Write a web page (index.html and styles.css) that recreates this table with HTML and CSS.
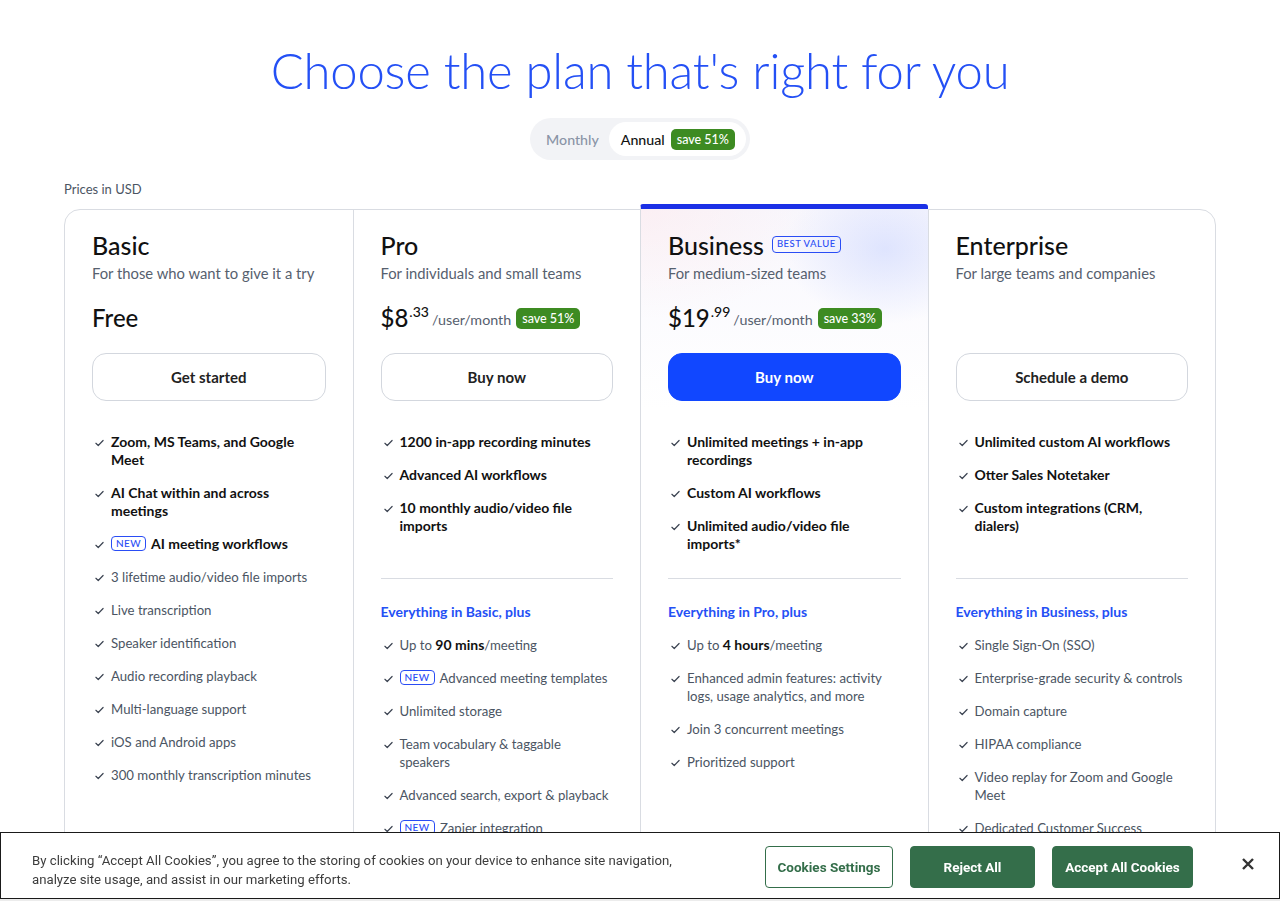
FILE: index.html
```html
<!DOCTYPE html>
<html lang="en">
<head>
<meta charset="utf-8">
<title>Choose the plan that's right for you</title>
<link rel="stylesheet" href="styles.css">
</head>
<body>
<main class="page">
  <h1 class="title">Choose the plan that's right for you</h1>
  <div class="toggle-wrap">
    <div class="toggle">
      <span class="seg seg-off">Monthly</span>
      <span class="seg seg-on">Annual <span class="save">save 51%</span></span>
    </div>
  </div>
  <p class="currency">Prices in USD</p>

  <section class="plans">
    <!-- Basic -->
    <div class="plan">
      <h2 class="plan-name">Basic</h2>
      <p class="plan-sub">For those who want to give it a try</p>
      <div class="price"><span class="amount">Free</span></div>
      <button class="btn">Get started</button>
      <ul class="feats">
        <li class="b"><svg class="chk" viewBox="0 0 10 8"><path d="M1 4.3 3.6 6.8 9 1.2"/></svg><span>Zoom, MS Teams, and Google Meet</span></li>
        <li class="b"><svg class="chk" viewBox="0 0 10 8"><path d="M1 4.3 3.6 6.8 9 1.2"/></svg><span>AI Chat within and across meetings</span></li>
        <li class="b"><svg class="chk" viewBox="0 0 10 8"><path d="M1 4.3 3.6 6.8 9 1.2"/></svg><span><span class="new">NEW</span> AI meeting workflows</span></li>
        <li><svg class="chk" viewBox="0 0 10 8"><path d="M1 4.3 3.6 6.8 9 1.2"/></svg><span>3 lifetime audio/video file imports</span></li>
        <li><svg class="chk" viewBox="0 0 10 8"><path d="M1 4.3 3.6 6.8 9 1.2"/></svg><span>Live transcription</span></li>
        <li><svg class="chk" viewBox="0 0 10 8"><path d="M1 4.3 3.6 6.8 9 1.2"/></svg><span>Speaker identification</span></li>
        <li><svg class="chk" viewBox="0 0 10 8"><path d="M1 4.3 3.6 6.8 9 1.2"/></svg><span>Audio recording playback</span></li>
        <li><svg class="chk" viewBox="0 0 10 8"><path d="M1 4.3 3.6 6.8 9 1.2"/></svg><span>Multi-language support</span></li>
        <li><svg class="chk" viewBox="0 0 10 8"><path d="M1 4.3 3.6 6.8 9 1.2"/></svg><span>iOS and Android apps</span></li>
        <li><svg class="chk" viewBox="0 0 10 8"><path d="M1 4.3 3.6 6.8 9 1.2"/></svg><span>300 monthly transcription minutes</span></li>
      </ul>
    </div>

    <!-- Pro -->
    <div class="plan">
      <h2 class="plan-name">Pro</h2>
      <p class="plan-sub">For individuals and small teams</p>
      <div class="price"><span class="amount">$8</span><sup class="cents">.33</sup><span class="per">/user/month</span><span class="save">save 51%</span></div>
      <button class="btn">Buy now</button>
      <ul class="feats top">
        <li class="b"><svg class="chk" viewBox="0 0 10 8"><path d="M1 4.3 3.6 6.8 9 1.2"/></svg><span>1200 in-app recording minutes</span></li>
        <li class="b"><svg class="chk" viewBox="0 0 10 8"><path d="M1 4.3 3.6 6.8 9 1.2"/></svg><span>Advanced AI workflows</span></li>
        <li class="b"><svg class="chk" viewBox="0 0 10 8"><path d="M1 4.3 3.6 6.8 9 1.2"/></svg><span>10 monthly audio/video file imports</span></li>
      </ul>
      <p class="plus">Everything in Basic, plus</p>
      <ul class="feats">
        <li><svg class="chk" viewBox="0 0 10 8"><path d="M1 4.3 3.6 6.8 9 1.2"/></svg><span>Up to <strong>90 mins</strong>/meeting</span></li>
        <li><svg class="chk" viewBox="0 0 10 8"><path d="M1 4.3 3.6 6.8 9 1.2"/></svg><span><span class="new">NEW</span> Advanced meeting templates</span></li>
        <li><svg class="chk" viewBox="0 0 10 8"><path d="M1 4.3 3.6 6.8 9 1.2"/></svg><span>Unlimited storage</span></li>
        <li><svg class="chk" viewBox="0 0 10 8"><path d="M1 4.3 3.6 6.8 9 1.2"/></svg><span>Team vocabulary &amp; taggable speakers</span></li>
        <li><svg class="chk" viewBox="0 0 10 8"><path d="M1 4.3 3.6 6.8 9 1.2"/></svg><span>Advanced search, export &amp; playback</span></li>
        <li><svg class="chk" viewBox="0 0 10 8"><path d="M1 4.3 3.6 6.8 9 1.2"/></svg><span><span class="new">NEW</span> Zapier integration</span></li>
      </ul>
    </div>

    <!-- Business -->
    <div class="plan plan-featured">
      <h2 class="plan-name">Business <span class="best">BEST VALUE</span></h2>
      <p class="plan-sub">For medium-sized teams</p>
      <div class="price"><span class="amount">$19</span><sup class="cents">.99</sup><span class="per">/user/month</span><span class="save">save 33%</span></div>
      <button class="btn btn-primary">Buy now</button>
      <ul class="feats top">
        <li class="b"><svg class="chk" viewBox="0 0 10 8"><path d="M1 4.3 3.6 6.8 9 1.2"/></svg><span>Unlimited meetings + in-app recordings</span></li>
        <li class="b"><svg class="chk" viewBox="0 0 10 8"><path d="M1 4.3 3.6 6.8 9 1.2"/></svg><span>Custom AI workflows</span></li>
        <li class="b"><svg class="chk" viewBox="0 0 10 8"><path d="M1 4.3 3.6 6.8 9 1.2"/></svg><span>Unlimited audio/video file imports*</span></li>
      </ul>
      <p class="plus">Everything in Pro, plus</p>
      <ul class="feats">
        <li><svg class="chk" viewBox="0 0 10 8"><path d="M1 4.3 3.6 6.8 9 1.2"/></svg><span>Up to <strong>4 hours</strong>/meeting</span></li>
        <li><svg class="chk" viewBox="0 0 10 8"><path d="M1 4.3 3.6 6.8 9 1.2"/></svg><span>Enhanced admin features: activity logs, usage analytics, and more</span></li>
        <li><svg class="chk" viewBox="0 0 10 8"><path d="M1 4.3 3.6 6.8 9 1.2"/></svg><span>Join 3 concurrent meetings</span></li>
        <li><svg class="chk" viewBox="0 0 10 8"><path d="M1 4.3 3.6 6.8 9 1.2"/></svg><span>Prioritized support</span></li>
      </ul>
    </div>

    <!-- Enterprise -->
    <div class="plan">
      <h2 class="plan-name">Enterprise</h2>
      <p class="plan-sub">For large teams and companies</p>
      <div class="price"></div>
      <button class="btn">Schedule a demo</button>
      <ul class="feats top">
        <li class="b"><svg class="chk" viewBox="0 0 10 8"><path d="M1 4.3 3.6 6.8 9 1.2"/></svg><span>Unlimited custom AI workflows</span></li>
        <li class="b"><svg class="chk" viewBox="0 0 10 8"><path d="M1 4.3 3.6 6.8 9 1.2"/></svg><span>Otter Sales Notetaker</span></li>
        <li class="b"><svg class="chk" viewBox="0 0 10 8"><path d="M1 4.3 3.6 6.8 9 1.2"/></svg><span>Custom integrations (CRM, dialers)</span></li>
      </ul>
      <p class="plus">Everything in Business, plus</p>
      <ul class="feats">
        <li><svg class="chk" viewBox="0 0 10 8"><path d="M1 4.3 3.6 6.8 9 1.2"/></svg><span>Single Sign-On (SSO)</span></li>
        <li><svg class="chk" viewBox="0 0 10 8"><path d="M1 4.3 3.6 6.8 9 1.2"/></svg><span>Enterprise-grade security &amp; controls</span></li>
        <li><svg class="chk" viewBox="0 0 10 8"><path d="M1 4.3 3.6 6.8 9 1.2"/></svg><span>Domain capture</span></li>
        <li><svg class="chk" viewBox="0 0 10 8"><path d="M1 4.3 3.6 6.8 9 1.2"/></svg><span>HIPAA compliance</span></li>
        <li><svg class="chk" viewBox="0 0 10 8"><path d="M1 4.3 3.6 6.8 9 1.2"/></svg><span>Video replay for Zoom and Google Meet</span></li>
        <li><svg class="chk" viewBox="0 0 10 8"><path d="M1 4.3 3.6 6.8 9 1.2"/></svg><span>Dedicated Customer Success Manager</span></li>
      </ul>
    </div>
  </section>
</main>

<div class="cookie">
  <p class="cookie-text">By clicking “Accept All Cookies”, you agree to the storing of cookies on your device to enhance site navigation, analyze site usage, and assist in our marketing efforts.</p>
  <div class="cookie-actions">
    <button class="cbtn cbtn-outline">Cookies Settings</button>
    <button class="cbtn cbtn-fill cbtn-reject">Reject All</button>
    <button class="cbtn cbtn-fill cbtn-accept">Accept All Cookies</button>
  </div>
  <button class="cookie-close" aria-label="Close"><svg viewBox="0 0 14 14"><path d="M2 2 12 12M12 2 2 12"/></svg></button>
</div>
</body>
</html>
```

FILE: styles.css
```css
* { box-sizing: border-box; }

html, body { margin: 0; padding: 0; background: #ffffff; }

body {
  font-family: "Lato", "Liberation Sans", sans-serif;
  color: #111111;
}

.page {
  width: 1152px;
  margin: 0 auto;
  padding-top: 38px;
  padding-bottom: 120px;
}

.title {
  margin: 0;
  text-align: center;
  font-size: 49px;
  line-height: 64px;
  font-weight: 300;
  color: #2450f5;
  letter-spacing: -0.2px;
}

.toggle-wrap {
  display: flex;
  justify-content: center;
  margin-top: 16px;
}

.toggle {
  display: flex;
  align-items: center;
  height: 42px;
  padding: 4px;
  background: #f2f3f6;
  border-radius: 21px;
}

.seg {
  display: flex;
  align-items: center;
  height: 34px;
  font-size: 14.2px;
  font-weight: 500;
}

.seg-off {
  padding: 0 10px 0 12px;
  color: #8a94a6;
}

.seg-on {
  padding: 0 11px 0 12px;
  background: #ffffff;
  border-radius: 17px;
  color: #111111;
  gap: 6px;
}

.save {
  display: inline-flex;
  align-items: center;
  height: 21px;
  padding: 0 6px;
  background: #3d8b22;
  color: #ffffff;
  border-radius: 5px;
  font-size: 12.5px;
  font-weight: 500;
}

.currency {
  margin: 20px 0 11px;
  font-size: 13px;
  line-height: 18px;
  color: #4b5563;
}

.plans {
  display: grid;
  grid-template-columns: repeat(4, 1fr);
  border: 1px solid #d9dce2;
  border-radius: 16px;
  align-items: start;
}

.plan {
  padding: 20px 27px 40px 27px;
  min-height: 700px;
}

.plan + .plan { border-left: 1px solid #d9dce2; }

.plan-featured {
  margin-top: -6px;
  padding-top: 21px;
  border-top: 5px solid #1b30e6;
  border-top-left-radius: 3px;
  border-top-right-radius: 3px;
  background:
    radial-gradient(ellipse 100px 75px at 85% 40px, rgba(196, 208, 255, 0.5), rgba(255,255,255,0) 100%),
    radial-gradient(ellipse 180px 110px at 0% 0%, rgba(255, 230, 232, 0.45), rgba(255,255,255,0) 100%),
    linear-gradient(180deg, #f8f7fd 0px, #ffffff 200px);
  min-height: 706px;
}

.plan-name {
  margin: 0;
  display: flex;
  align-items: center;
  gap: 8px;
  font-size: 25px;
  line-height: 30px;
  font-weight: 500;
  color: #111111;
}

.best {
  display: inline-flex;
  align-items: center;
  height: 17px;
  padding: 0 4px;
  border: 1px solid #2a4df5;
  border-radius: 4px;
  font-size: 9.5px;
  letter-spacing: 0.5px;
  font-weight: 500;
  color: #2a4df5;
  margin-top: -2px;
}

.plan-sub {
  margin: 3px 0 0;
  font-size: 14.8px;
  line-height: 20px;
  color: #56606e;
}

.price {
  display: flex;
  align-items: center;
  height: 30px;
  margin-top: 20px;
}

.amount {
  font-size: 24px;
  line-height: 30px;
  font-weight: 500;
  color: #111111;
}

.cents {
  align-self: flex-start;
  font-size: 14px;
  line-height: 14px;
  margin: 2px 3px 0 1px;
  font-weight: 500;
  color: #111111;
}

.per {
  font-size: 14.3px;
  color: #56606e;
  margin-right: 5px;
  padding-top: 3px;
}

.btn {
  display: block;
  width: 100%;
  height: 48px;
  margin-top: 20px;
  border: 1px solid #d3d7de;
  border-radius: 14px;
  background: #ffffff;
  font-family: inherit;
  font-size: 15px;
  font-weight: 700;
  color: #222222;
}

.btn-primary {
  background: #1147ff;
  border-color: #1147ff;
  color: #ffffff;
}

.feats {
  list-style: none;
  margin: 32px 0 0;
  padding: 0;
  display: flex;
  flex-direction: column;
  gap: 15px;
}

.feats.top {
  height: 146px;
  border-bottom: 1px solid #d9dce2;
}

.feats li {
  display: flex;
  align-items: flex-start;
  font-size: 13.2px;
  line-height: 18px;
  color: #4b5563;
}

.feats li.b {
  font-size: 14px;
  font-weight: 700;
  color: #111111;
}

.feats strong { font-weight: 700; color: #111111; font-size: 14px; }

.chk {
  flex: none;
  width: 9px;
  height: 8px;
  margin: 6px 7px 0 3px;
  fill: none;
  stroke: #3a4250;
  stroke-width: 1.3;
  stroke-linecap: round;
  stroke-linejoin: round;
}

.new {
  display: inline-block;
  height: 15px;
  line-height: 13px;
  padding: 0 4px;
  border: 1px solid #2a4df5;
  border-radius: 4px;
  font-size: 10px;
  font-weight: 500;
  letter-spacing: 0.4px;
  color: #2a4df5;
  vertical-align: 2px;
  margin-right: 2px;
}

.plus {
  margin: 24px 0 0;
  font-size: 14px;
  line-height: 18px;
  font-weight: 700;
  color: #2450f5;
}

.plus + .feats { margin-top: 15px; }

/* Cookie banner */
.cookie {
  position: fixed;
  left: 0;
  right: 0;
  bottom: 2px;
  height: 67px;
  display: flex;
  align-items: center;
  padding: 2px 24px 0 31px;
  background: #ffffff;
  border: 1px solid #1a1a1a;
  box-shadow: 0 2px 0 #ececec;
  font-family: "Roboto", "Liberation Sans", sans-serif;
}

.cookie-text {
  flex: 1;
  margin: 7px 0 0;
  max-width: 680px;
  font-size: 13.2px;
  line-height: 19px;
  color: #3d3d3d;
}

.cookie-actions {
  display: flex;
  gap: 17px;
  margin-left: auto;
}

.cbtn {
  height: 42px;
  padding: 0;
  border-radius: 4px;
  font-family: inherit;
  font-size: 13.5px;
  font-weight: 700;
  white-space: nowrap;
}

.cbtn-outline {
  width: 128px;
  background: #ffffff;
  border: 1px solid #346e4a;
  color: #346e4a;
}

.cbtn-fill {
  background: #346e4a;
  border: 1px solid #346e4a;
  color: #ffffff;
}

.cbtn-reject { width: 125px; }
.cbtn-accept { width: 141px; }

.cookie-close {
  margin: -6px 0 0 48px;
  width: 14px;
  height: 14px;
  padding: 0;
  border: 0;
  background: transparent;
}

.cookie-close svg {
  width: 14px;
  height: 14px;
  display: block;
  fill: none;
  stroke: #333333;
  stroke-width: 2.4;
}
```
